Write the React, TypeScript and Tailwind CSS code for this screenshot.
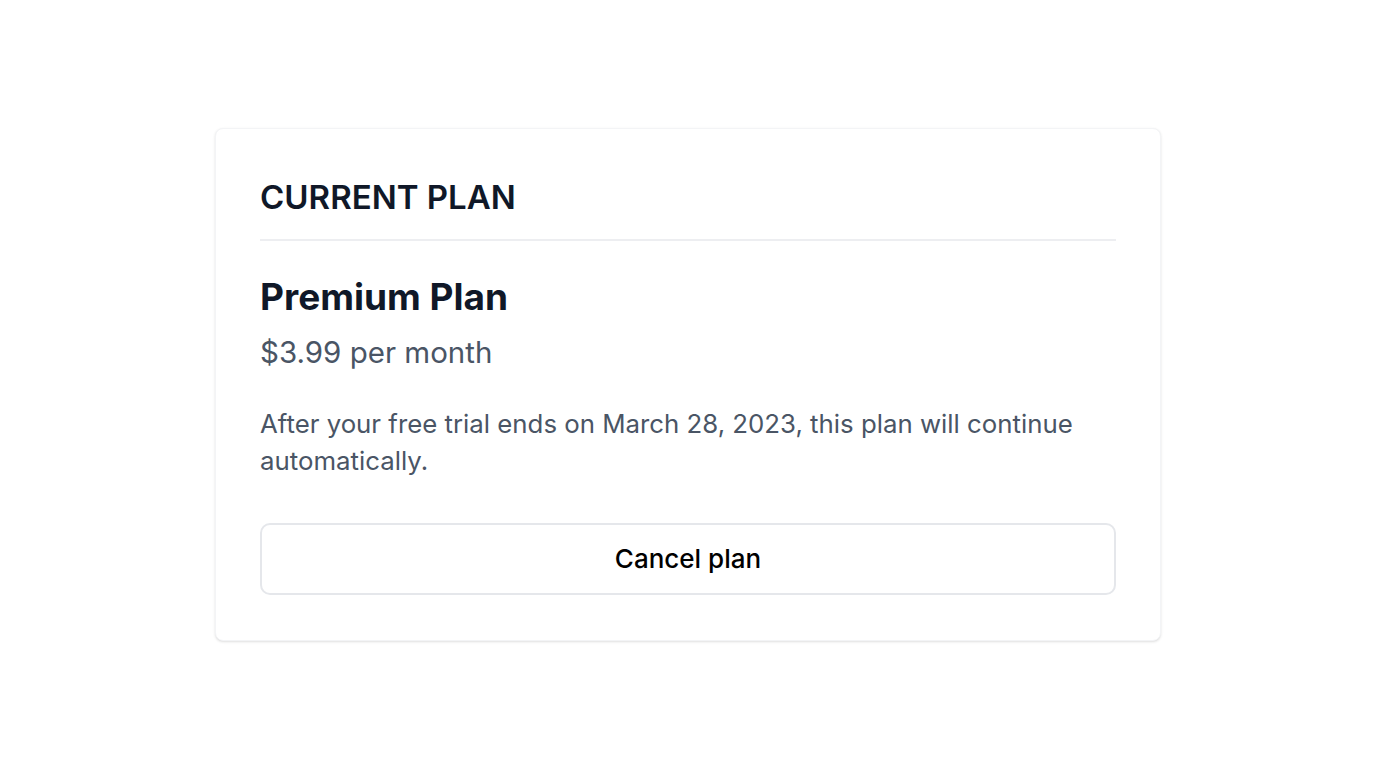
export default function App() {
  return (
    <div className="flex min-h-screen items-center justify-center bg-white font-['Inter',sans-serif]">
      <div className="w-[946px] rounded-lg border border-gray-100 bg-white px-[44px] py-[45px] shadow-sm">
        {/* header */}
        <h2 className="border-b-2 border-gray-200/70 pb-[19px] text-[33px] leading-[46px] font-semibold text-gray-900">
          CURRENT PLAN
        </h2>
        <h3 className="mt-[34px] text-[37px] leading-[44px] font-bold text-gray-900">Premium Plan</h3>
        <p className="mt-[15px] text-[29.5px] leading-9 text-gray-600">$3.99 per month</p>
        <p className="mt-[35px] text-[25.8px] leading-[37px] text-gray-600">
          After your free trial ends on March 28, 2023, this plan will continue automatically.
        </p>
        <button className="mt-[44px] flex h-[72px] w-full items-center justify-center rounded-[10px] border-2 border-gray-200 bg-white text-[26px] font-medium text-black">
          Cancel plan
        </button>
      </div>
    </div>
  )
}
